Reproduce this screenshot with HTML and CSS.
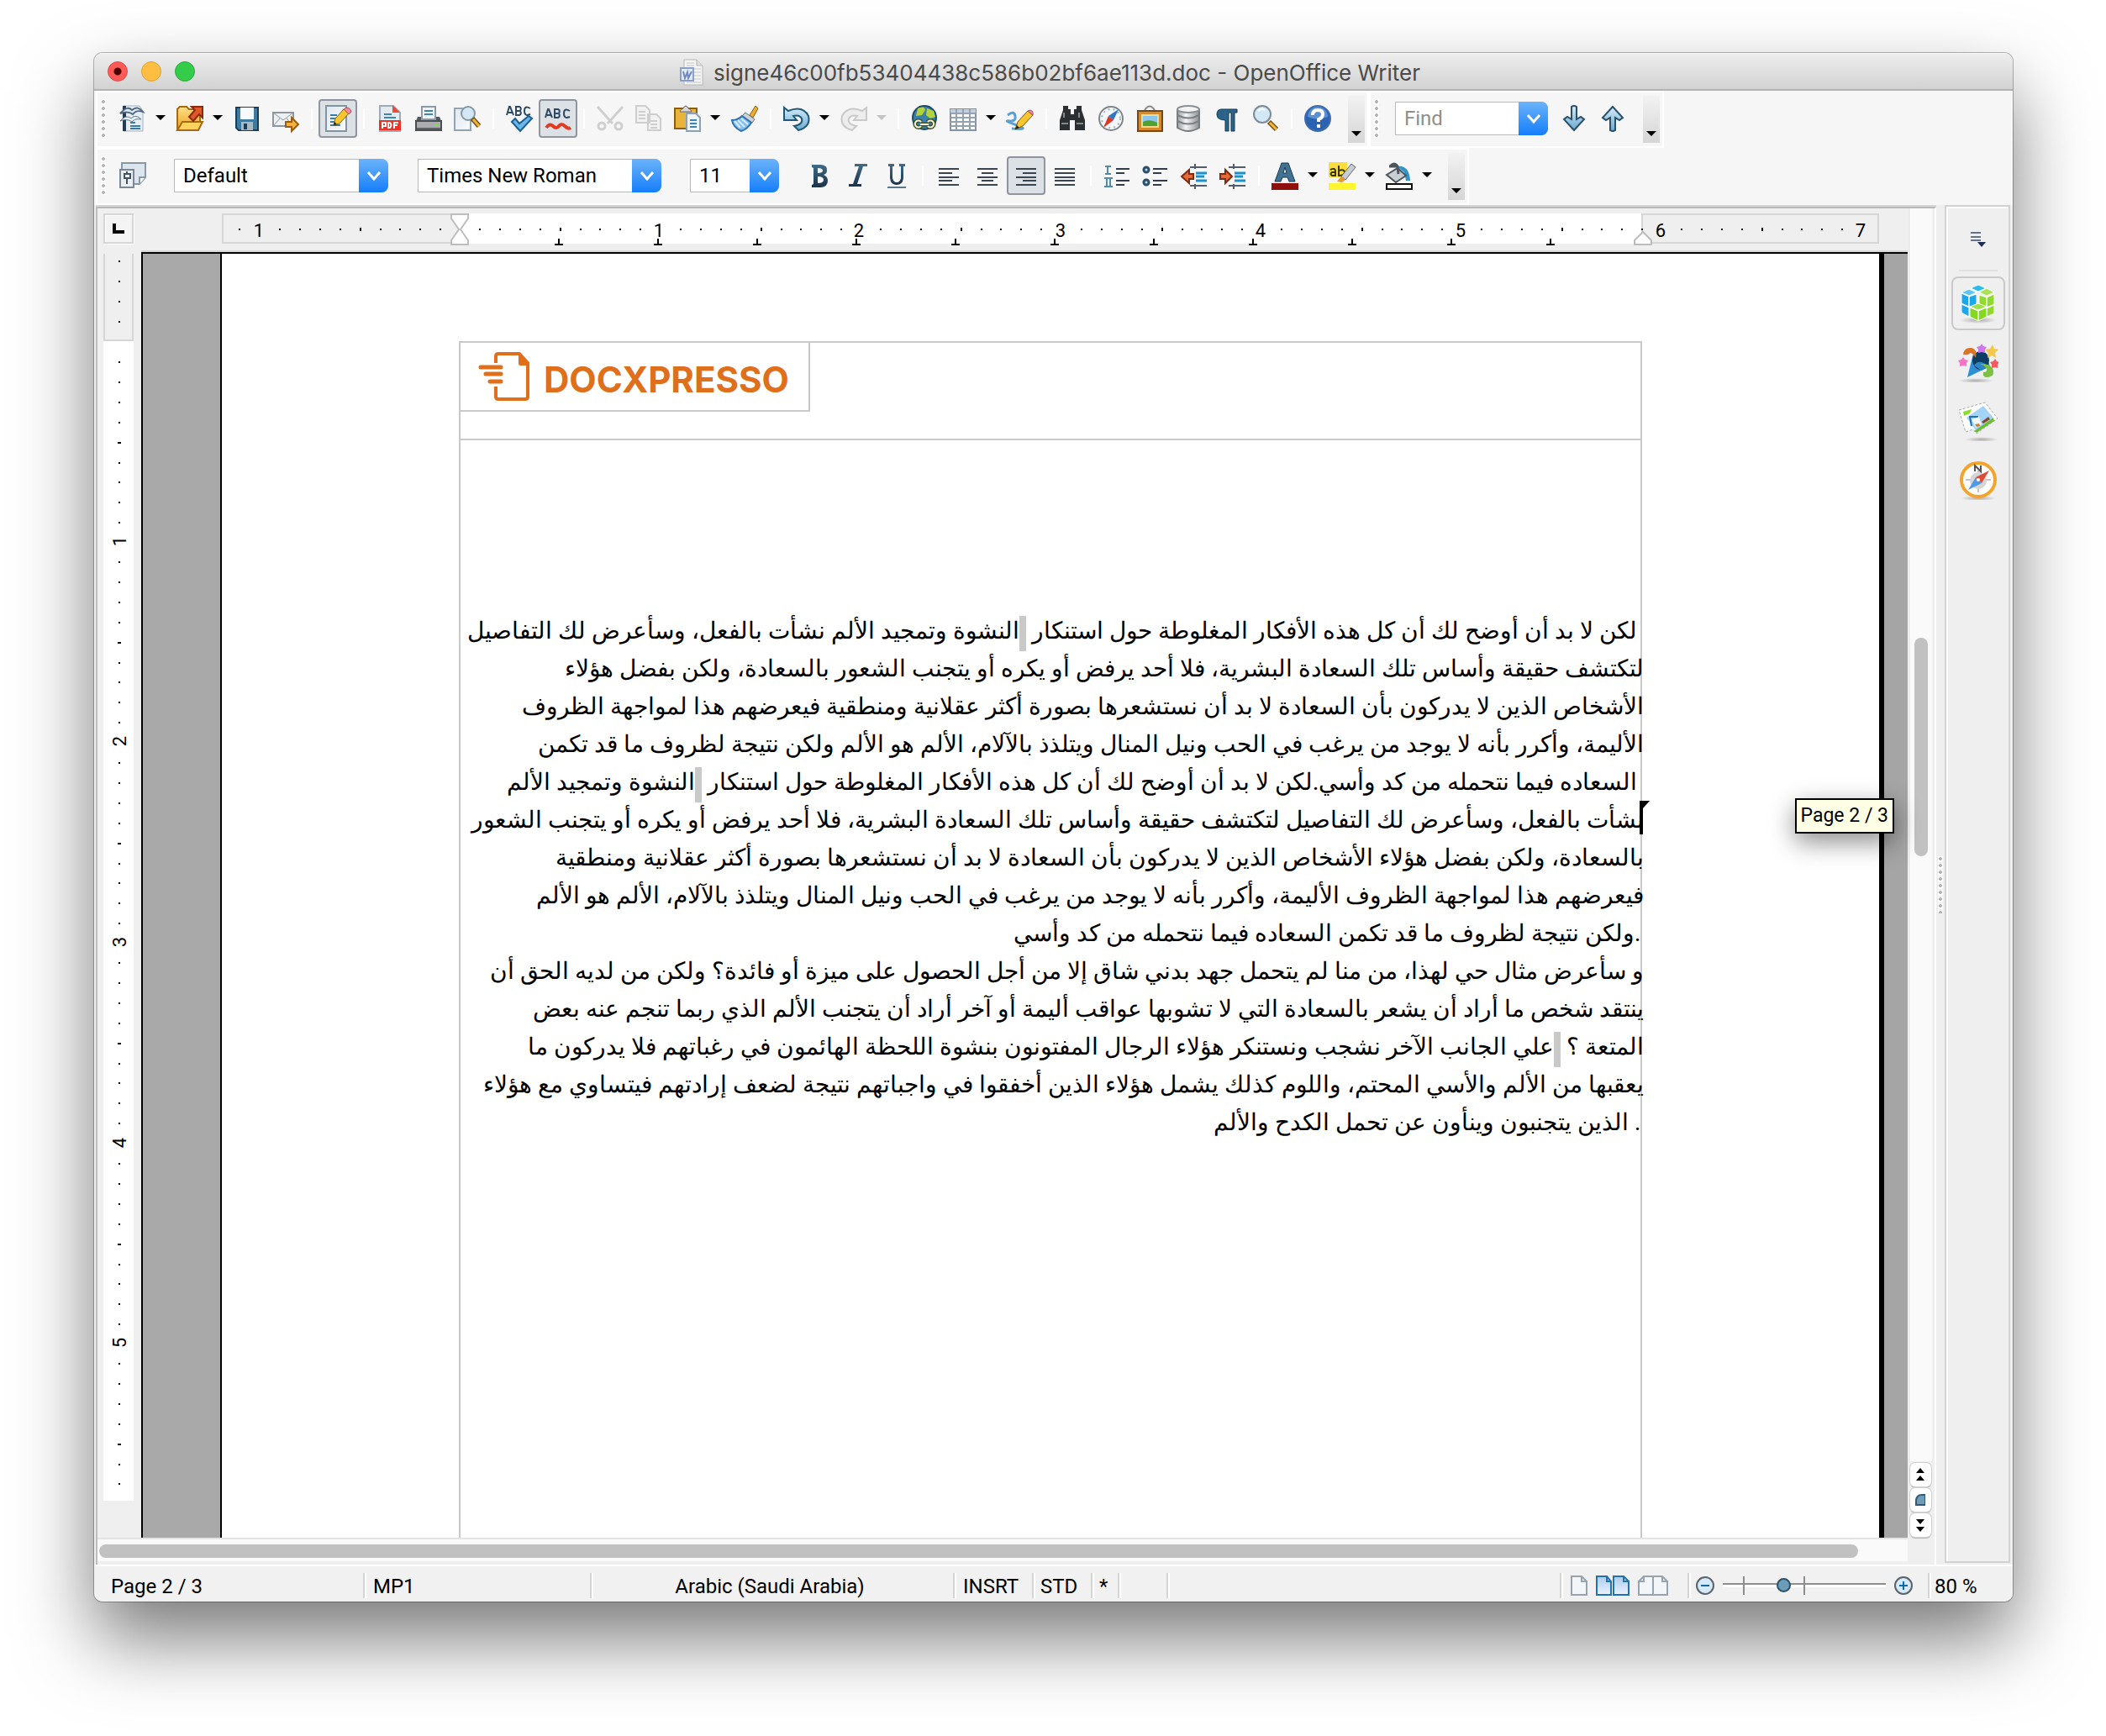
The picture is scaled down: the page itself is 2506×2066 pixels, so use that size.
FILE: index.html
```html
<!DOCTYPE html>
<html lang="en">
<head>
<meta charset="utf-8">
<title>signe46c00fb53404438c586b02bf6ae113d.doc - OpenOffice Writer</title>
<link rel="stylesheet" href="styles.css">
</head>
<body>
<svg width="0" height="0" class="defs" aria-hidden="true">
  <defs>
    <linearGradient id="gBlue" x1="0" y1="0" x2="0" y2="1"><stop offset="0" stop-color="#d3ecf9"/><stop offset="1" stop-color="#6aa9cf"/></linearGradient>
    <linearGradient id="gPaper" x1="0" y1="0" x2="1" y2="1"><stop offset="0" stop-color="#dfe9f1"/><stop offset="1" stop-color="#f8fafc"/></linearGradient>
    <linearGradient id="gGold" x1="0" y1="0" x2="0" y2="1"><stop offset="0" stop-color="#ffe08a"/><stop offset="1" stop-color="#e9a21c"/></linearGradient>
    <linearGradient id="gSteel" x1="0" y1="0" x2="0" y2="1"><stop offset="0" stop-color="#3f6c88"/><stop offset="1" stop-color="#1b3348"/></linearGradient>
    <linearGradient id="gGrey" x1="0" y1="0" x2="1" y2="0"><stop offset="0" stop-color="#9a9ea2"/><stop offset=".4" stop-color="#f4f4f4"/><stop offset="1" stop-color="#8c9094"/></linearGradient>
    <linearGradient id="gPage" x1="0" y1="0" x2="0" y2="1"><stop offset="0" stop-color="#aecbf0"/><stop offset="1" stop-color="#e8f3fd"/></linearGradient>
    <radialGradient id="gShade"><stop offset="0" stop-color="#999" stop-opacity=".8"/><stop offset="1" stop-color="#999" stop-opacity="0"/></radialGradient>
    <g id="inchH"><path d="M23 18h2v2h-2zM47 18h2v2h-2zM71 18h2v2h-2zM95 18h2v2h-2zM119 17h2v4h-2zM143 18h2v2h-2zM166 18h2v2h-2zM190 18h2v2h-2zM214 18h2v2h-2z"/></g>
    <g id="inchV"><path d="M18 23h2v2h-2zM18 47h2v2h-2zM18 71h2v2h-2zM18 95h2v2h-2zM17 119h4v2h-4zM18 143h2v2h-2zM18 166h2v2h-2zM18 190h2v2h-2zM18 214h2v2h-2z"/></g>
    <path id="tab" d="M-1 30h2v6h4v2h-10v-2h4z"/>
  </defs>
</svg>

<main class="window">
  <header class="titlebar">
    <div class="lights">
      <button class="light close" aria-label="Close"></button>
      <button class="light minimise" aria-label="Minimise"></button>
      <button class="light zoom" aria-label="Zoom"></button>
    </div>
    <h1 class="title">
      <svg width="28" height="32" viewBox="0 0 28 32"><path d="M5 1h15l7 7v23H5z" fill="#f4f4f4" stroke="#b8b8b8"/><path d="M20 1v7h7" fill="#ddd" stroke="#b8b8b8"/><path d="M8 5h9M8 8h9M17 12h8M17 16h8M17 20h8M17 24h8M8 28h17" stroke="#c6c6c6"/><rect x="1" y="11" width="15" height="15" fill="#e4eaf4" stroke="#8a9fc9" stroke-width="2"/><path d="M4 15l2 8 3-7 1 7 4-8" fill="none" stroke="#7189bd" stroke-width="2"/></svg>
      <span>signe46c00fb53404438c586b02bf6ae113d.doc - OpenOffice Writer</span>
    </h1>
  </header>

  <div class="toolbars">
    <div class="toolbar-row">
      <div class="toolbar" role="toolbar" aria-label="Standard">
        <span class="grip"></span>
        <button class="tool" aria-label="New"><svg viewBox="0 0 32 32"><path d="M5 1h19l4 6v24H5z" fill="#e6edf3" stroke="#a3b2bf"/><path d="M6 1v30" stroke="#223d55" stroke-width="4"/><path d="M1 10c7-8 11-7 14-4 5-4 9-3 13 2-6-2-9-1-12 3-5-4-10-3-15-1z" fill="#dfe9f1" stroke="#4f6a80" stroke-width="2"/><path d="M1 19c5-6 10-6 13-3 4-4 8-3 12 1-5-1-8 0-11 3-4-3-9-3-14-1z" fill="#e9f0f6" stroke="#5c7589"/><path d="M13 21h6M13 25h12M13 28h12" stroke="#3c7ba6" stroke-width="2"/></svg></button><button class="drop" aria-label="New options"></button>
        <button class="tool" aria-label="Open"><svg viewBox="0 0 32 32"><path d="M1 30V5l3-3h8l3 3h13v14" fill="url(#gGold)" stroke="#a86a10" stroke-width="2"/><path d="M1 30l6-10h24l-5 10z" fill="#ffd25f" stroke="#a86a10" stroke-width="2"/><path d="M18 2h13v13l-4-4-7 8-5-5 7-8z" fill="#e2572a" stroke="#8d2a0d" stroke-width="2"/></svg></button><button class="drop" aria-label="Open options"></button>
        <button class="tool" aria-label="Save"><svg viewBox="0 0 32 32"><path d="M3 3h26v27H6l-3-3z" fill="#3e7ba2" stroke="#173f5c" stroke-width="2"/><path d="M8 3h16v14H8z" fill="#f7fafc"/><path d="M9 20h14v10H9z" fill="#a9b9c4"/><path d="M12 22h4v7h-4z" fill="#173f5c"/></svg></button>
        <button class="tool" aria-label="Document as e-mail"><svg viewBox="0 0 32 32"><path d="M1 9h24v16H1z" fill="#edf1f4" stroke="#8b97a1" stroke-width="2"/><path d="M1 9l12 9 12-9M1 25l8-9M25 25l-8-9" fill="none" stroke="#8b97a1"/><path d="M16 20h7v-5l8 8-8 8v-5h-7z" fill="#f4b03c" stroke="#9a5d0d" stroke-width="2"/></svg></button>
        <span class="sep"></span>
        <button class="tool on" aria-label="Edit file" aria-pressed="true"><svg viewBox="0 0 32 32"><path d="M2 1h24v30H2z" fill="url(#gPaper)" stroke="#8293a1" stroke-width="2"/><path d="M7 12h8M7 16h6M7 20h5M7 24h12" stroke="#3c7ba6" stroke-width="2"/><path d="M11 24l2-8L23 5l6 5-11 12z" fill="#f7c52e" stroke="#8a6110"/><path d="M23 5l3-2q5 0 6 5l-3 3z" fill="#ee8a9d" stroke="#b14b61"/><path d="M11 24l1-4 3 3z" fill="#222"/></svg></button>
        <span class="sep"></span>
        <button class="tool" aria-label="Export as PDF"><svg viewBox="0 0 32 32"><path d="M4 1h16l8 8v22H4z" fill="#e3eaf0" stroke="#9dabb7" stroke-width="2"/><path d="M19 0l9 9h-9z" fill="#ef4836"/><path d="M9 11h9M9 15h14" stroke="#3c86b4" stroke-width="2"/><path d="M3 18h26v12H3z" fill="#ea3323"/><path d="M7 28v-7h4v4H7M14 21v6h2q3-3 0-6zM21 28v-7h5M21 24h4" fill="none" stroke="#fff" stroke-width="2"/></svg></button>
        <button class="tool" aria-label="Print"><svg viewBox="0 0 32 32"><path d="M8 2h16v15H8z" fill="#eef4f8" stroke="#8d9aa5" stroke-width="2"/><path d="M11 7h10M11 11h10" stroke="#3c86b4" stroke-width="2"/><path d="M3 14h4v4h18v-4h4l2 5H1z" fill="#54585b"/><path d="M1 19h30v11H1z" fill="#a9adb0" stroke="#4a4e51" stroke-width="2"/><path d="M24 23h3v2h-3z" fill="#7be03a"/><path d="M2 28h28" stroke="#5e6265" stroke-width="2"/></svg></button>
        <button class="tool" aria-label="Page preview"><svg viewBox="0 0 32 32"><path d="M1 4h19v26H1z" fill="url(#gPaper)" stroke="#93a3b0" stroke-width="2"/><circle cx="17" cy="10" r="8" fill="#d3e8f7" stroke="#8a97a3" stroke-width="2"/><path d="M22 16l8 9" stroke="#7a5312" stroke-width="6"/><path d="M23 17l7 8" stroke="#e9b340" stroke-width="3"/></svg></button>
        <span class="sep"></span>
        <button class="tool" aria-label="Spelling and grammar"><svg viewBox="0 0 32 32"><path d="M1 12L4 2h1l4 10M3 9h5M12 2v10h4q3-1 1-5 2-4-1-5zM12 7h4M29 4q-7-4-7 3t7 4" fill="none" stroke="#2c4a63" stroke-width="2"/><path d="M7 20l4-4 5 6 11-9 4 3-14 15z" fill="#6db7e8" stroke="#1c5f93" stroke-width="2"/></svg></button>
        <button class="tool on" aria-label="Auto spellcheck" aria-pressed="true"><svg viewBox="0 0 32 32"><path d="M1 15L4 5h1l4 10M3 12h5M12 5v10h4q3-1 1-5 2-4-1-5zM12 10h4M30 7q-7-4-7 3t7 4" fill="none" stroke="#2c4a63" stroke-width="2"/><path d="M2 27q4-6 8-2t7 0 7 0 7 2" fill="none" stroke="#e23b22" stroke-width="4"/></svg></button>
        <span class="sep"></span>
        <button class="tool" aria-label="Cut" disabled><svg viewBox="0 0 32 32"><path d="M1 2l18 20M31 2L13 22" stroke="#cfcfcf" stroke-width="3"/><circle cx="6" cy="25" r="4" fill="none" stroke="#cfcfcf" stroke-width="3"/><circle cx="26" cy="25" r="4" fill="none" stroke="#cfcfcf" stroke-width="3"/></svg></button>
        <button class="tool" aria-label="Copy" disabled><svg viewBox="0 0 32 32"><path d="M1 1h11l5 5v15H1zM15 11h10l5 5v14H15z" fill="#f2f2f2" stroke="#cecece" stroke-width="2"/><path d="M4 8h8M4 12h8M4 16h8M18 19h8M18 23h8M18 27h8" stroke="#cecece" stroke-width="2"/></svg></button>
        <button class="tool" aria-label="Paste"><svg viewBox="0 0 32 32"><path d="M1 4h26v24H1z" fill="#e9b43b" stroke="#8d5e12" stroke-width="2"/><path d="M7 8q1-3 4-4 3-6 6 0 3 1 4 4z" fill="#d9d9d9" stroke="#666"/><path d="M15 10h11l5 5v16H15z" fill="#eef4f8" stroke="#8fa1b0" stroke-width="2"/><path d="M19 18h8M19 22h8M19 26h8" stroke="#3c86b4" stroke-width="2"/></svg></button><button class="drop" aria-label="Paste options"></button>
        <button class="tool" aria-label="Format paintbrush"><svg viewBox="0 0 32 32"><path d="M22 12L29 1l3 3-6 11z" fill="#edae2e" stroke="#8b5b10"/><path d="M17 9l11 8-3 4-12-8z" fill="#cdd2d6" stroke="#6c757c"/><path d="M13 13l11 8q-5 8-12 10Q2 26 1 18q7 0 12-5z" fill="#85bfee" stroke="#2f72b0" stroke-width="2"/><path d="M8 18l8 8M12 16l8 7M4 19l7 8" stroke="#d7edfc" stroke-width="2"/></svg></button>
        <span class="sep"></span>
        <button class="tool" aria-label="Undo"><svg viewBox="0 0 32 32"><path d="M1 3l5 4q17-7 24 6 3 13-12 17l-5-5q11-2 9-9-3-5-10-3l4 5H1z" fill="url(#gBlue)" stroke="#1f5878" stroke-width="2"/></svg></button><button class="drop" aria-label="Undo list"></button>
        <button class="tool" aria-label="Redo" disabled><svg viewBox="0 0 32 32"><path d="M31 3l-5 4Q9 0 2 13q-3 13 12 17l5-5q-11-2-9-9 3-5 10-3l-4 5h15z" fill="#ededed" stroke="#c9c9c9" stroke-width="2"/></svg></button><button class="drop" aria-label="Redo list" disabled></button>
        <span class="sep"></span>
        <button class="tool" aria-label="Hyperlink"><svg viewBox="0 0 32 32"><circle cx="16" cy="15" r="14" fill="#3b80a8" stroke="#1a4a68" stroke-width="2"/><path d="M8 4q8-4 9 2l-4 6-7 1zM19 4l8 3 2 7-6 2-5-4z" fill="#b4d23c"/><path d="M12 25a4 4 0 1 1 0-5M20 25a4 4 0 1 0 0-5M11 23h10" fill="none" stroke="#475026" stroke-width="5"/><path d="M12 25a4 4 0 1 1 0-5M20 25a4 4 0 1 0 0-5M11 23h10" fill="none" stroke="#eef2dc" stroke-width="2"/></svg></button>
        <button class="tool" aria-label="Table"><svg viewBox="0 0 32 32"><path d="M1 5h30v25H1z" fill="#fff" stroke="#8493a2" stroke-width="2"/><path d="M1 5h30v5H1z" fill="#c3cfda"/><path d="M1 10h30M1 15h30M1 20h30M1 25h30M8 5v25M16 5v25M24 5v25" stroke="#94a3b1" stroke-width="2"/></svg></button><button class="drop" aria-label="Table options"></button>
        <button class="tool" aria-label="Show draw functions"><svg viewBox="0 0 32 32"><path d="M1 12q8-6 9 1t-7 6 9 5-6 4" fill="none" stroke="#5b9fd3" stroke-width="3"/><path d="M10 29l3-9L25 7l6 5-12 13z" fill="#f7c52e" stroke="#7a5510"/><path d="M25 7l3-1q4 1 3 6z" fill="#ee8a9d" stroke="#b14b61"/><path d="M10 29l2-5 3 3z" fill="#222"/></svg></button>
        <span class="sep"></span>
        <button class="tool" aria-label="Find and replace"><svg viewBox="0 0 32 32"><path d="M5 1h6v4h3v6h4V5h3V1h6v5l4 12v12H19V18h-6v12H1V18L5 6z" fill="#2c2f31"/><path d="M3 22h8M21 22h8M6 9v6M24 9v6" stroke="#84898c" stroke-width="2"/></svg></button>
        <button class="tool" aria-label="Navigator"><svg viewBox="0 0 32 32"><circle cx="16" cy="16" r="14" fill="#f4f7f9" stroke="#7d868d" stroke-width="2"/><circle cx="16" cy="16" r="11" fill="none" stroke="#a8b0b6" stroke-width="2" stroke-dasharray="2 4"/><path d="M25 5l-6 13-6-5z" fill="#2e76c8"/><path d="M7 27l6-14 6 5z" fill="#e23323"/></svg></button>
        <button class="tool" aria-label="Gallery"><svg viewBox="0 0 32 32"><path d="M10 6q6-9 12 0" fill="none" stroke="#888" stroke-width="2"/><path d="M2 7h29v24H2z" fill="#d98a25" stroke="#7b4409" stroke-width="2"/><path d="M7 12h19v14H7z" fill="#8ec7ee" stroke="#f7d78a" stroke-width="2"/><path d="M8 20q8-4 17 1v4H8z" fill="#4fa131"/></svg></button>
        <button class="tool" aria-label="Data sources"><svg viewBox="0 0 32 32"><path d="M3 5v22q13 8 26 0V5z" fill="url(#gGrey)" stroke="#777c80" stroke-width="2"/><ellipse cx="16" cy="5" rx="13" ry="4" fill="#f3f3f3" stroke="#8b9094" stroke-width="2"/><path d="M3 12q13 7 26 0M3 19q13 7 26 0" fill="none" stroke="#7b8084" stroke-width="2"/></svg></button>
        <button class="tool" aria-label="Nonprinting characters"><svg viewBox="0 0 32 32"><path d="M28 5v4h-3v22h-4V9h-3v22h-4V18Q4 18 4 11t8-6z" fill="#2b6488" stroke="#143a54"/></svg></button>
        <button class="tool" aria-label="Zoom"><svg viewBox="0 0 32 32"><circle cx="12" cy="11" r="10" fill="#d3e8f7" stroke="#7f8b95" stroke-width="2"/><path d="M7 7q4-4 8-1" fill="none" stroke="#fff" stroke-width="2"/><path d="M20 20l9 9" stroke="#7a5312" stroke-width="6"/><path d="M21 21l8 8" stroke="#f0b73b" stroke-width="3"/></svg></button>
        <span class="sep"></span>
        <button class="tool" aria-label="Help"><svg viewBox="0 0 32 32"><circle cx="16" cy="16" r="15" fill="#2b62b2" stroke="#3f6cae" stroke-width="2"/><path d="M4 14a12 12 0 0 1 24 0q-12 5-24 0z" fill="#5b8fd4"/><path d="M10 12q0-6 6-6t6 5q0 4-5 6v3" fill="none" stroke="#fff" stroke-width="4"/><path d="M15 23h4v4h-4z" fill="#fff"/></svg></button>
        <button class="overflow" aria-label="More tools"></button>
      </div>
      <div class="toolbar" role="toolbar" aria-label="Find">
        <span class="grip"></span>
        <div class="combo find"><input type="text" placeholder="Find" aria-label="Find"><button class="combo-arrow" aria-label="Search history"><svg viewBox="0 0 18 12"><path d="M2 2l7 8 7-8" fill="none" stroke="#fff" stroke-width="3"/></svg></button></div>
        <button class="tool" aria-label="Find next"><svg viewBox="0 0 32 32"><path d="M13 2q3-2 6 0v15l5-3 4 3-12 13L4 17l4-3 5 3z" fill="url(#gBlue)" stroke="#2b4f68" stroke-width="2"/></svg></button>
        <button class="tool" aria-label="Find previous"><svg viewBox="0 0 32 32"><path d="M13 30q3 2 6 0V15l5 3 4-3L16 2 4 15l4 3 5-3z" fill="url(#gBlue)" stroke="#2b4f68" stroke-width="2"/></svg></button>
        <button class="overflow" aria-label="More find tools"></button>
      </div>
    </div>

    <div class="toolbar-row">
      <div class="toolbar" role="toolbar" aria-label="Formatting">
        <span class="grip"></span>
        <button class="tool" aria-label="Styles and formatting"><svg viewBox="0 0 32 32"><path d="M3 1h28v17l-7 8H3z" fill="#dce5ed" stroke="#8998a5" stroke-width="2"/><path d="M31 18h-7v8" fill="#fff" stroke="#8998a5" stroke-width="2"/><path d="M1 9h16v21H1z" fill="#e9eef2" stroke="#7a8894" stroke-width="2"/><path d="M6 14h7v5H6zM9 19v7M9 11v3" fill="none" stroke="#44525e" stroke-width="2"/></svg></button>
        <div class="combo style"><select aria-label="Paragraph style"><option>Default</option></select><span class="combo-arrow"><svg viewBox="0 0 18 12"><path d="M2 2l7 8 7-8" fill="none" stroke="#fff" stroke-width="3"/></svg></span></div>
        <div class="combo font"><select aria-label="Font name"><option>Times New Roman</option></select><span class="combo-arrow"><svg viewBox="0 0 18 12"><path d="M2 2l7 8 7-8" fill="none" stroke="#fff" stroke-width="3"/></svg></span></div>
        <div class="combo size"><select aria-label="Font size"><option>11</option></select><span class="combo-arrow"><svg viewBox="0 0 18 12"><path d="M2 2l7 8 7-8" fill="none" stroke="#fff" stroke-width="3"/></svg></span></div>
        <button class="tool" aria-label="Bold"><svg viewBox="0 0 32 32"><path fill-rule="evenodd" d="M7 3h11q8 1 7 7 0 4-4 5 5 2 5 7 0 7-8 8H7v-3l2-1V7L7 6zM14 7v6q6 0 6-3t-6-3zM14 17v8q7 0 7-4t-7-4z" fill="url(#gSteel)"/></svg></button>
        <button class="tool" aria-label="Italic"><svg viewBox="0 0 32 32"><path d="M12 2h15v3h-5l-7 21h5v3H5v-3h5l7-21h-5z" fill="url(#gSteel)"/></svg></button>
        <button class="tool" aria-label="Underline"><svg viewBox="0 0 32 32"><path d="M6 2h7v3h-2v14q1 5 5 5t5-5V5h-2V2h7v3h-2v14q-1 8-8 8t-8-8V5H6z" fill="url(#gSteel)"/><path d="M5 29h22v2H5z" fill="#5b7689"/></svg></button>
        <span class="sep"></span>
        <button class="tool" aria-label="Align left"><svg viewBox="0 0 32 32"><path d="M4 8h24M4 13h16M4 18h24M4 22h16M4 27h24" stroke="#3a4552" stroke-width="2"/></svg></button>
        <button class="tool" aria-label="Centre"><svg viewBox="0 0 32 32"><path d="M4 8h24M9 13h14M4 18h24M9 22h14M4 27h24" stroke="#3a4552" stroke-width="2"/></svg></button>
        <button class="tool on" aria-label="Align right" aria-pressed="true"><svg viewBox="0 0 32 32"><path d="M4 8h24M12 13h16M4 18h24M12 22h16M4 27h24" stroke="#3a4552" stroke-width="2"/></svg></button>
        <button class="tool" aria-label="Justified"><svg viewBox="0 0 32 32"><path d="M4 8h24M4 13h24M4 18h24M4 22h24M4 27h24" stroke="#3a4552" stroke-width="2"/></svg></button>
        <span class="sep"></span>
        <button class="tool" aria-label="Numbering"><svg viewBox="0 0 32 32"><path d="M2 5h7M2 14h7M5 5v9M1 19h10M1 29h10M4 19v10M8 19v10" stroke="#4f8cad" stroke-width="2"/><path d="M15 8h16M15 13h10M15 22h16M15 27h10" stroke="#333d4a" stroke-width="2"/></svg></button>
        <button class="tool" aria-label="Bullets"><svg viewBox="0 0 32 32"><circle cx="5" cy="9" r="3" fill="#bcd7e6" stroke="#2c4f68" stroke-width="3"/><circle cx="5" cy="24" r="3" fill="#bcd7e6" stroke="#2c4f68" stroke-width="3"/><path d="M13 8h17M13 13h10M13 22h17M13 27h10" stroke="#333d4a" stroke-width="2"/></svg></button>
        <button class="tool" aria-label="Decrease indent"><svg viewBox="0 0 32 32"><path d="M11 6h20M11 28h20M17 2v6M17 26v6" stroke="#525c66" stroke-width="2"/><path d="M18 13h13M18 17h10M18 22h13" stroke="#1993d0" stroke-width="3"/><path d="M1 17l9-8v5h5v6h-5v5z" fill="#e66a35" stroke="#7e2a10" stroke-width="2"/></svg></button>
        <button class="tool" aria-label="Increase indent"><svg viewBox="0 0 32 32"><path d="M11 6h20M11 28h20M17 2v6M17 26v6" stroke="#525c66" stroke-width="2"/><path d="M18 13h13M18 17h10M18 22h13" stroke="#1993d0" stroke-width="3"/><path d="M15 17L7 9v5H1v6h6v5z" fill="#e66a35" stroke="#7e2a10" stroke-width="2"/></svg></button>
        <span class="sep"></span>
        <button class="tool" aria-label="Font colour"><svg viewBox="0 0 32 32"><path fill-rule="evenodd" d="M12 1h8l8 22h-7l-2-5h-6l-2 5H4zM16 6l-2 7h4z" fill="#41728f" stroke="#173b54"/><path d="M0 25h32v8H0z" fill="#8f0f0a"/></svg></button><button class="drop" aria-label="Font colour options"></button>
        <button class="tool" aria-label="Highlighting"><svg viewBox="0 0 32 32"><path d="M0 0h22v18H0z" fill="#fddd3c"/><path d="M2 9q6-3 6 2v5H4q-3-2 0-4h4M12 4v12q7 0 7-4t-7-2" fill="none" stroke="#3a3410" stroke-width="2"/><path d="M15 17L27 2l5 4-12 15z" fill="#c8cdd1" stroke="#5f676d"/><path d="M10 23l5-6 5 4-4 3z" fill="#e9962a"/><path d="M0 25h32v8H0z" fill="#fdf52e"/></svg></button><button class="drop" aria-label="Highlighting options"></button>
        <button class="tool" aria-label="Background colour"><svg viewBox="0 0 32 32"><path d="M13 5q15-2 16 17h-5L22 12z" fill="#2f94c9"/><path d="M1 15L14 7l10 9-12 8z" fill="#c9ced2" stroke="#4c555c" stroke-width="2"/><path d="M5 5q5-6 9 0l1 9M4 5h9" fill="none" stroke="#4c555c" stroke-width="3"/><path d="M1 26h30v6H1z" fill="#fff" stroke="#111" stroke-width="2"/></svg></button><button class="drop" aria-label="Background colour options"></button>
        <button class="overflow" aria-label="More formatting tools"></button>
      </div>
    </div>
  </div>

  <div class="workspace">
    <section class="editor">
      <div class="corner"><button class="tab-type" aria-label="Tab type"><svg width="14" height="14" viewBox="0 0 14 14"><path d="M0 1h4v8h10v4H0z"/></svg></button></div>
      <div class="ruler-h-area">
        <div class="ruler-h">
          <span class="zone out-left"></span><span class="zone in"></span><span class="zone out-right"></span>
          <svg class="marks" width="100%" height="100%">
            <use href="#inchH" x="45"/><use href="#inchH" x="283"/><use href="#inchH" x="522"/><use href="#inchH" x="760"/><use href="#inchH" x="999"/><use href="#inchH" x="1237"/><use href="#inchH" x="1475"/><use href="#inchH" x="1713"/>
            <path d="M20 18h2v2h-2z"/>
            <use href="#tab" x="401"/><use href="#tab" x="519"/><use href="#tab" x="637"/><use href="#tab" x="755"/><use href="#tab" x="873"/><use href="#tab" x="991"/><use href="#tab" x="1109"/><use href="#tab" x="1227"/><use href="#tab" x="1345"/><use href="#tab" x="1463"/><use href="#tab" x="1581"/>
            <g text-anchor="middle"><text x="44" y="28">1</text><text x="520" y="28">1</text><text x="758" y="28">2</text><text x="998" y="28">3</text><text x="1236" y="28">4</text><text x="1474" y="28">5</text><text x="1712" y="28">6</text><text x="1950" y="28">7</text></g>
            <g fill="#fdfdfd" stroke="#bdbdbd" stroke-width="2"><path d="M273 1h20v5l-9 13 9 13v5h-20v-5l9-13-9-13z"/><path d="M1681 37v-5l10-10 10 10v5z"/></g>
          </svg>
        </div>
      </div>
      <div class="ruler-v">
        <span class="zone out-top"></span><span class="zone in"></span>
        <svg class="marks" width="100%" height="100%">
          <path d="M18 8h2v2h-2zM18 32h2v2h-2zM18 56h2v2h-2zM18 80h2v2h-2z"/>
          <use href="#inchV" y="105"/><use href="#inchV" y="343"/><use href="#inchV" y="582"/><use href="#inchV" y="820"/><use href="#inchV" y="1059"/><use href="#inchV" y="1297"/>
          <g text-anchor="middle"><text transform="translate(27 342) rotate(-90)">1</text><text transform="translate(27 580) rotate(-90)">2</text><text transform="translate(27 819) rotate(-90)">3</text><text transform="translate(27 1058) rotate(-90)">4</text><text transform="translate(27 1296) rotate(-90)">5</text></g>
        </svg>
      </div>

      <div class="canvas">
        <article class="page">
          <div class="frame">
            <div class="page-header">
              <div class="logo">
                <svg width="62" height="58" viewBox="0 0 62 58"><path d="M21 13V5q0-3 3-3h25l10 11v40q0 3-3 3H24q-3 0-3-3V41" fill="none" stroke="#df6f1b" stroke-width="4"/><path d="M48 2l12 12v2H50q-2 0-2-3z" fill="#df6f1b"/><path d="M3 18h24M9 26h18M14 35h13" stroke="#df6f1b" stroke-width="5" stroke-linecap="round"/></svg>
                <span>DOCXPRESSO</span>
              </div>
            </div>
            <div class="text" lang="ar">
              <p>
                <span class="line inset">لكن لا بد أن أوضح لك أن كل هذه الأفكار المغلوطة حول استنكار <i class="nbsp"></i>النشوة وتمجيد الألم نشأت بالفعل، وسأعرض لك التفاصيل</span>
                <span class="line">لتكتشف حقيقة وأساس تلك السعادة البشرية، فلا أحد يرفض أو يكره أو يتجنب الشعور بالسعادة، ولكن بفضل هؤلاء</span>
                <span class="line">الأشخاص الذين لا يدركون بأن السعادة لا بد أن نستشعرها بصورة أكثر عقلانية ومنطقية فيعرضهم هذا لمواجهة الظروف</span>
                <span class="line">الأليمة، وأكرر بأنه لا يوجد من يرغب في الحب ونيل المنال ويتلذذ بالآلام، الألم هو الألم ولكن نتيجة لظروف ما قد تكمن</span>
                <span class="line inset">السعاده فيما نتحمله من كد وأسي.لكن لا بد أن أوضح لك أن كل هذه الأفكار المغلوطة حول استنكار <i class="nbsp"></i>النشوة وتمجيد الألم</span>
                <span class="line">نشأت بالفعل، وسأعرض لك التفاصيل لتكتشف حقيقة وأساس تلك السعادة البشرية، فلا أحد يرفض أو يكره أو يتجنب الشعور<svg class="caret" width="12" height="40" viewBox="0 0 12 40"><path d="M0 0h12L4 9v31H0z"/></svg></span>
                <span class="line">بالسعادة، ولكن بفضل هؤلاء الأشخاص الذين لا يدركون بأن السعادة لا بد أن نستشعرها بصورة أكثر عقلانية ومنطقية</span>
                <span class="line">فيعرضهم هذا لمواجهة الظروف الأليمة، وأكرر بأنه لا يوجد من يرغب في الحب ونيل المنال ويتلذذ بالآلام، الألم هو الألم</span>
                <span class="line end">ولكن نتيجة لظروف ما قد تكمن السعاده فيما نتحمله من كد وأسي.</span>
              </p>
              <p>
                <span class="line">و سأعرض مثال حي لهذا، من منا لم يتحمل جهد بدني شاق إلا من أجل الحصول على ميزة أو فائدة؟ ولكن من لديه الحق أن</span>
                <span class="line">ينتقد شخص ما أراد أن يشعر بالسعادة التي لا تشوبها عواقب أليمة أو آخر أراد أن يتجنب الألم الذي ربما تنجم عنه بعض</span>
                <span class="line">المتعة ؟ <i class="nbsp"></i>علي الجانب الآخر نشجب ونستنكر هؤلاء الرجال المفتونون بنشوة اللحظة الهائمون في رغباتهم فلا يدركون ما</span>
                <span class="line">يعقبها من الألم والأسي المحتم، واللوم كذلك يشمل هؤلاء الذين أخفقوا في واجباتهم نتيجة لضعف إرادتهم فيتساوي مع هؤلاء</span>
                <span class="line end">الذين يتجنبون وينأون عن تحمل الكدح والألم .</span>
              </p>
            </div>
          </div>
        </article>
        <div class="tooltip" role="tooltip">Page 2 / 3</div>
      </div>

      <div class="scroll-v">
        <div class="track"><span class="thumb"></span></div>
        <button class="nav" aria-label="Previous page"><svg width="12" height="16" viewBox="0 0 12 16"><path d="M6 0l5 6H1zM6 9l5 6H1z"/></svg></button>
        <button class="nav" aria-label="Navigation"><svg width="12" height="14" viewBox="0 0 12 14"><path d="M1 13V7q1-6 7-6h4v12z" fill="#6f9db9" stroke="#2f5b78" stroke-width="2"/></svg></button>
        <button class="nav" aria-label="Next page"><svg width="12" height="16" viewBox="0 0 12 16"><path d="M6 7L1 1h10zM6 16l-5-6h10z"/></svg></button>
      </div>
      <div class="scroll-h"><span class="thumb"></span></div>
    </section>

    <aside class="sidebar">
      <div class="splitter"><span class="splitter-grip"></span></div>
      <nav class="deck" aria-label="Sidebar">
        <button class="deck-menu" aria-label="Sidebar settings"><svg width="20" height="20" viewBox="0 0 20 20"><path d="M1 2h12M1 7h12M1 11h12" stroke="#63738c" stroke-width="2"/><path d="M9 13h10l-5 6z" fill="#1d2c55"/></svg></button>
        <button class="deck-tab active" aria-label="Properties"><svg viewBox="0 0 48 48"><ellipse cx="24" cy="44" rx="22" ry="4" fill="url(#gShade)"/><g stroke="#fff"><path d="M4 12l9 4v12l-9-4zM13 16l9-3v12l-9 4z" fill="#1aa7ee"/><path d="M4 25l9 4v11l-9-5z" fill="#1aa7ee"/><path d="M4 11l9-4 9 4-9 4z" fill="#5cc9f5"/><path d="M15 6l9-4 9 4-9 4z" fill="#28bdeb"/><path d="M25 14l9 3v11l-9-3zM34 17l9-4v12l-9 4z" fill="#8fdb2c"/><path d="M25 11l9-5 9 5-9 4z" fill="#a8e552"/><path d="M34 30l9-4v10l-9 4z" fill="#8fdb2c"/><path d="M14 29l10 4v12l-10-5zM24 33l10-4v11l-10 5z" fill="#86d722"/><path d="M14 28l10-4 10 4-10 4z" fill="#a0e047"/></g></svg></button>
        <button class="deck-tab" aria-label="Styles"><svg viewBox="0 0 48 48"><ellipse cx="21" cy="46" rx="21" ry="3" fill="url(#gShade)"/><path d="M11 42l7-28q14-3 20 15z" fill="#2f8fd6"/><ellipse cx="27" cy="22" rx="10" ry="11" fill="#0d3d62"/><path d="M19 28q6-9 17 1l-8 5z" fill="#2d86c4"/><path d="M6 15q1-9 10-8 7 1 5 12-3-6-7-6-1 3-8 2z" fill="#dd7424"/><path d="M26 26q14-1 16 8 1 8-8 8-5 0-4-6 5 0 4-4-2-4-8-6z" fill="#7cc142"/><g><path d="M28 2l2 3 4 1-2 3v4l-4-1-4 1v-4l-2-3 4-1z" fill="#cf78ee"/><path d="M41 3l2 5 5 1-4 4 1 6-5-3-5 3 1-6-4-4 6-1z" fill="#f3c84c"/><path d="M6 18l2 3 4 1-2 3v4l-4-1-4 1v-4l-2-3 4-1z" fill="#f375c4"/><path d="M44 20l2 3 3 1-2 3v4l-3-1-4 1v-4l-2-3 4-1z" fill="#f3595f"/></g></svg></button>
        <button class="deck-tab" aria-label="Gallery"><svg viewBox="0 0 48 48"><ellipse cx="28" cy="46" rx="20" ry="3" fill="url(#gShade)"/><path d="M1 11L32 2l15 19-25 18-4-5-9 3z" fill="#fff" stroke="#aaa" stroke-dasharray="3 2"/><path d="M6 13l10-3-2 5-7 3z" fill="#8edb2e"/><path d="M10 20L30 6l12 14-21 15z" fill="#a3d3f6"/><path d="M16 30l-2-11h10" fill="none" stroke="#2273b5" stroke-width="2"/><path d="M19 36l23-16 1 4-21 14z" fill="#6bbd35"/><path d="M28 25l8-6 2 3-8 5z" fill="#884828"/><path d="M16 22l9-3 3 9-7 4z" fill="#f1f7fc"/><path d="M20 28l5-1 1 3-4 1z" fill="#cf7c2c"/></svg></button>
        <button class="deck-tab" aria-label="Navigator"><svg viewBox="0 0 48 48"><ellipse cx="24" cy="46" rx="21" ry="3" fill="url(#gShade)"/><circle cx="24" cy="24" r="20" fill="#fdfdfd" stroke="#f2a42d" stroke-width="4"/><path d="M9 24h30M24 13v26" stroke="#c4c4c4" stroke-width="2"/><circle cx="24" cy="25" r="10" fill="#d5d5d5"/><path d="M20 14V7l7 7V7" fill="none" stroke="#555" stroke-width="2"/><path d="M37 13l-9 15-7-7z" fill="#de4b38"/><path d="M12 36l9-15 7 7z" fill="#4f9ae8"/><circle cx="24" cy="24" r="2" fill="#fff"/></svg></button>
      </nav>
    </aside>
  </div>

  <footer class="statusbar">
    <span class="cell c-page">Page 2 / 3</span>
    <span class="cell c-style">MP1</span>
    <span class="cell c-lang">Arabic (Saudi Arabia)</span>
    <span class="cell c-insert">INSRT</span>
    <span class="cell c-select">STD</span>
    <span class="cell c-changed">*</span>
    <span class="cell c-sign"></span>
    <span class="cell c-info"></span>
    <div class="cell c-views">
      <button aria-label="Single page"><svg width="20" height="24" viewBox="0 0 20 24"><path d="M1 1h12l6 6v16H1z" fill="#f3f6f8" stroke="#97a4ae" stroke-width="2"/><path d="M13 1v6h6" fill="none" stroke="#97a4ae" stroke-width="2"/></svg></button>
      <button aria-label="Several pages"><svg width="40" height="24" viewBox="0 0 40 24"><g fill="url(#gPage)" stroke="#2272ad" stroke-width="2"><path d="M1 1h12l5 6v16H1zM21 1h12l6 6v16H21z"/><path d="M13 1v6h5M33 1v6h6" fill="none"/></g></svg></button>
      <button aria-label="Book mode"><svg width="36" height="24" viewBox="0 0 36 24"><g fill="#f3f6f8" stroke="#97a4ae" stroke-width="2"><path d="M7 1h11v22H1V7zM18 1h11l6 6v16H18z"/><path d="M7 1v6H1M29 1v6h6" fill="none"/></g></svg></button>
    </div>
    <div class="cell c-zoom">
      <button aria-label="Zoom out"><svg width="22" height="22" viewBox="0 0 22 22"><circle cx="11" cy="11" r="10" fill="#d5e9f8" stroke="#59636b" stroke-width="2"/><path d="M6 11h10" stroke="#0f67a8" stroke-width="2"/></svg></button>
      <input type="range" min="0" max="100" value="36" aria-label="Zoom">
      <button aria-label="Zoom in"><svg width="22" height="22" viewBox="0 0 22 22"><circle cx="11" cy="11" r="10" fill="#d5e9f8" stroke="#59636b" stroke-width="2"/><path d="M6 11h10M11 6v10" stroke="#0f67a8" stroke-width="2"/></svg></button>
    </div>
    <span class="cell c-percent">80 %</span>
  </footer>
</main>
</body>
</html>
```
FILE: styles.css
```css
* { box-sizing: border-box; }
html { background: #fff; }
body {
  margin: 0;
  min-height: 100vh;
  padding: 63px 111px 160px 112px;
  display: flex;
  font-family: Roboto, "Liberation Sans", sans-serif;
  font-size: 24px;
  color: #000;
}
button {
  appearance: none;
  border: 0;
  padding: 0;
  background: none;
  font: inherit;
  color: inherit;
}
svg { display: block; }
.defs { position: absolute; }

.window {
  flex: 1;
  min-width: 0;
  display: flex;
  flex-direction: column;
  border-radius: 10px;
  overflow: hidden;
  background: #f6f6f6;
  box-shadow: 0 0 0 1px rgba(0, 0, 0, .28), 0 44px 90px rgba(0, 0, 0, .53);
}

/* title bar */
.titlebar {
  height: 45px;
  display: grid;
  grid-template-columns: 1fr auto 1fr;
  align-items: center;
  padding: 0 16px;
  background: linear-gradient(#ededed, #d2d2d2);
  border-top: 1px solid #f7f7f7;
  border-bottom: 2px solid #b2b2b2;
}
.lights { display: flex; gap: 16px; }
.light { width: 24px; height: 24px; border-radius: 50%; border: 1px solid; }
.close { background: radial-gradient(circle, #4d0000 0 4px, #fc5b57 5px); border-color: #e2443f; }
.minimise { background: #fdbe41; border-color: #e0a033; }
.zoom { background: #35cc4b; border-color: #27ab35; }
.title {
  margin: 0;
  padding: 2px 8px 0 0;
  display: flex;
  align-items: center;
  gap: 12px;
  font-family: Inter, "Liberation Sans", sans-serif;
  font-size: 26px;
  font-weight: 400;
  color: #4a4a4a;
  white-space: nowrap;
}

/* toolbars */
.toolbar-row { display: flex; padding-left: 2px; }
.toolbar {
  height: 68px;
  display: flex;
  align-items: center;
  padding: 0 3px 2px 4px;
  border: 2px solid #fff;
}
.grip {
  width: 6px;
  height: 46px;
  margin-right: 9px;
  background: radial-gradient(circle at 3px 3px, #b5b5b5 0 2px, #fff 2px 4px, transparent 4px) 0 0 / 6px 8px;
}
.tool {
  width: 46px;
  height: 46px;
  display: grid;
  place-items: center;
  border-radius: 4px;
}
.tool svg { width: 32px; height: 32px; overflow: visible; }
.tool.on { background: #dce1e6; border: 2px solid #8f949f; }
.drop { width: 22px; height: 46px; padding: 0 5px 2px 3px; display: grid; place-items: center; }
.drop::before, .overflow::before {
  content: "";
  width: 12px;
  height: 6px;
  background: #000;
  clip-path: polygon(0 0, 100% 0, 50% 100%);
}
.drop:disabled::before { background: #c4c4c4; }
.sep { width: 2px; height: 24px; margin: 0 7px; background: #fff; }
.overflow {
  width: 20px;
  height: 56px;
  margin-left: 13px;
  margin-top: 2px;
  padding-bottom: 8px;
  display: grid;
  justify-items: center;
  align-items: end;
  background: linear-gradient(#f2f2f2, #d6d6d6);
}
.combo { display: flex; height: 40px; position: relative; }
.combo select, .combo input {
  appearance: none;
  width: 100%;
  min-width: 0;
  height: 40px;
  padding: 0 10px;
  border: 1px solid #b9b9b9;
  border-radius: 0 8px 8px 0;
  background: #fff;
  font: inherit;
  color: #000;
  outline: 0;
}
.combo input::placeholder { color: #8e8e8e; opacity: 1; }
.combo-arrow {
  position: absolute;
  top: 0;
  right: 0;
  width: 35px;
  height: 40px;
  display: grid;
  place-items: center;
  border-radius: 0 8px 8px 0;
  background: linear-gradient(#6cb3fa, #157efb);
  pointer-events: none;
}
.combo-arrow svg { width: 18px; height: 12px; }
.style { width: 255px; margin-left: 26px; }
.font { width: 290px; margin-left: 35px; }
.size { width: 106px; margin: 0 25px 0 34px; }
.find { width: 182px; margin: 0 8px 0 10px; }

/* workspace */
.workspace { flex: 1; min-height: 0; display: flex; background: #efefef; }
.editor {
  flex: 1;
  min-width: 0;
  margin: 2px 0 0 2px;
  display: grid;
  grid-template: 52px minmax(0, 1fr) 32px / 52px minmax(0, 1fr) 32px;
  border-left: 2px solid #bdbdbd;
  border-top: 2px solid #b8b8b8;
  border-right: 2px solid #fff;
  box-shadow: 0 -2px #d6d6d6;
}
.corner { padding: 6px 6px 6px 7px; }
.tab-type {
  width: 36px;
  height: 36px;
  display: grid;
  place-items: center;
  border: 2px solid #d6d6d6;
  background: #f4f4f4;
  box-shadow: 1px 1px #fff, inset 1px 1px #fff;
}
.ruler-h-area { padding: 6px 34px 0 96px; border-bottom: 2px solid #d6d6d6; }
.ruler-h { position: relative; display: flex; height: 36px; }
.zone { border: 2px solid #d6d6d6; background: #efefef; }
.zone.in { flex: 1; border: 0; background: #fff; }
.out-left { width: 283px; border-right: 0; }
.out-right { width: 283px; }
.marks { position: absolute; inset: 0; overflow: visible; font-size: 22px; }
.ruler-v {
  position: relative;
  display: flex;
  flex-direction: column;
  margin: 2px 9px 44px 7px;
}
.ruler-v .marks { overflow: hidden; }
.out-top { height: 104px; border-top: 0; }

.canvas {
  position: relative;
  display: flex;
  padding: 0 28px 0 92px;
  background: linear-gradient(90deg, #a9a9a9, #a5a5a5);
  border-top: 2px solid #000;
  border-left: 2px solid #000;
}
.page {
  flex: 1;
  min-width: 0;
  display: flex;
  flex-direction: column;
  padding: 104px 282px 0;
  background: #fff;
  border-left: 2px solid #000;
  border-right: 6px solid #000;
}
.frame { flex: 1; border: 2px solid #c9c9c9; border-bottom: 0; }
.page-header { height: 116px; border-bottom: 2px solid #c9c9c9; }
.logo {
  width: 416px;
  height: 82px;
  padding-left: 21px;
  display: flex;
  align-items: center;
  gap: 16px;
  border: solid #c9c9c9;
  border-width: 0 2px 2px 0;
  font-family: Inter, "Liberation Sans", sans-serif;
  font-size: 42px;
  font-weight: 700;
  color: #df6f1b;
}
.logo span { padding-top: 6px; }
.text {
  margin: 204px -4px 0 0;
  font-family: "Times New Roman", "Liberation Serif", serif;
  font-size: 28px;
  line-height: 45px;
  text-align: right;
  white-space: nowrap;
}
.text p { margin: 0; }
.line { display: block; position: relative; direction: ltr; }
.inset { padding-right: 8px; }
.end { padding-right: 4px; }
.nbsp {
  display: inline-block;
  width: 8px;
  height: 42px;
  vertical-align: middle;
  margin: -2px 0;
  background: #c9c9c9;
}
.caret { position: absolute; right: -7px; top: 0; }
.tooltip {
  position: absolute;
  top: 648px;
  right: 16px;
  height: 42px;
  padding: 0 5px;
  line-height: 38px;
  font-size: 23px;
  border: 2px solid #000;
  background: #ffffe6;
  box-shadow: 0 10px 30px rgba(0, 0, 0, .45);
}

.scroll-v {
  grid-column: 3;
  grid-row: 1 / 3;
  display: flex;
  flex-direction: column;
  align-items: center;
  gap: 2px;
  padding-right: 2px;
}
.scroll-v .track {
  flex: 1;
  width: 28px;
  display: grid;
  grid-template-rows: 511fr 260fr 720fr;
  justify-items: center;
  background: #fafafa;
  border-left: 2px solid #ececec;
}
.scroll-v .thumb { grid-row: 2; width: 16px; }
.thumb { border-radius: 8px; background: #c1c1c1; }
.nav {
  width: 25px;
  height: 28px;
  display: grid;
  place-items: center;
  border-radius: 6px;
  background: #fff;
  box-shadow: 0 0 0 1px #d0d0d0, 0 2px 1px #b5b5b5;
}
.scroll-v .nav:last-child { margin-bottom: 1px; }
.scroll-h {
  grid-column: 1 / 3;
  height: 28px;
  display: flex;
  padding: 6px 59px 4px 2px;
  background: #fafafa;
  border-top: 2px solid #e4e4e4;
}
.scroll-h .thumb { flex: 1; }

/* sidebar */
.sidebar { width: 91px; display: flex; }
.splitter { width: 10px; display: grid; place-items: center; }
.splitter-grip {
  width: 6px;
  height: 68px;
  background: radial-gradient(circle at 3px 3px, #b5b5b5 0 2px, #fff 2px 4px, transparent 4px) 0 0 / 6px 8px;
}
.deck {
  flex: 1;
  display: flex;
  flex-direction: column;
  align-items: center;
  margin: 0 3px 2px 0;
  border: 2px solid #d2d2d2;
  box-shadow: inset 2px 2px #fff;
  padding: 3px 0 0 2px;
}
.deck-menu {
  width: 46px;
  height: 74px;
  margin-bottom: 6px;
  display: grid;
  place-items: center;
  border-bottom: 2px solid #e0e0e0;
}
.deck-tab {
  width: 64px;
  height: 64px;
  margin-bottom: 6px;
  display: grid;
  place-items: center;
  border-radius: 8px;
}
.deck-tab.active { border: 2px solid #c9c9c9; }
.deck-tab svg { width: 48px; height: 48px; }

/* status bar */
.statusbar {
  height: 44px;
  padding-top: 3px;
  display: flex;
  align-items: center;
  border-top: 2px solid #fff;
  background: #f1f1f1;
}
.cell {
  height: 30px;
  flex: none;
  line-height: 32px;
  padding-left: 10px;
  border-right: 2px solid #d4d4d4;
  box-shadow: 2px 0 #fff;
  white-space: nowrap;
}
.c-page { width: 322px; padding-left: 20px; }
.c-style { width: 270px; }
.c-lang { width: 432px; padding: 0 6px 0 0; text-align: center; }
.c-insert { width: 94px; }
.c-select { width: 70px; padding-left: 8px; }
.c-changed { width: 32px; padding-left: 8px; }
.c-sign { width: 58px; }
.c-info { flex: 1; }
.c-views { width: 152px; display: flex; align-items: center; gap: 10px; padding-left: 11px; }
.c-zoom { width: 286px; display: flex; align-items: center; justify-content: space-between; padding: 0 18px 0 8px; }
.c-zoom input {
  appearance: none;
  width: 194px;
  height: 22px;
  margin: 0;
  background:
    linear-gradient(#8d8d8d, #8d8d8d) 24px 0 / 2px 22px no-repeat,
    linear-gradient(#8d8d8d, #8d8d8d) 96px 0 / 2px 22px no-repeat,
    linear-gradient(#8d8d8d 0 2px, #fff 2px 5px) 0 8px / 100% 5px no-repeat;
}
.c-zoom input::-webkit-slider-thumb {
  appearance: none;
  width: 17px;
  height: 17px;
  border: 2px solid #2c5069;
  border-radius: 50%;
  background: #6b9cb8;
}
.c-percent { width: 99px; padding-left: 6px; border: 0; box-shadow: none; }
```
